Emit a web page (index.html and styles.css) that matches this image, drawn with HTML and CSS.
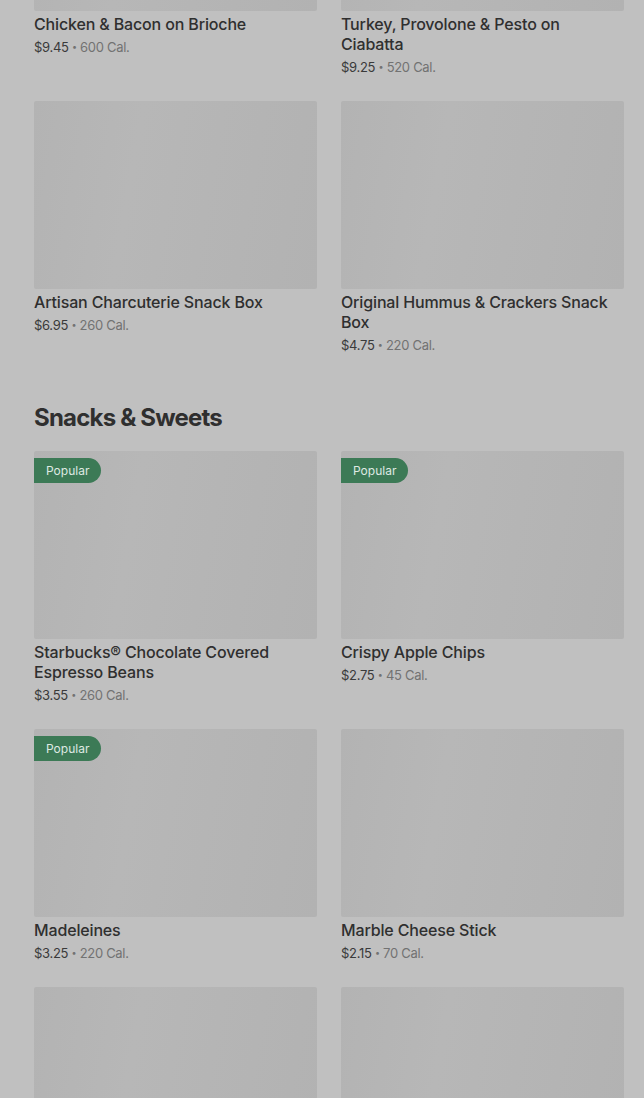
FILE: index.html
```html
<!DOCTYPE html>
<html lang="en">
<head>
<meta charset="utf-8">
<title>Menu</title>
<link rel="stylesheet" href="styles.css">
</head>
<body>
<main class="page">
  <section class="section">
    <div class="grid">
      <div class="card">
        <div class="thumb"></div>
        <div class="title">Chicken &amp; Bacon on Brioche</div>
        <div class="meta"><span class="price">$9.45</span> <span class="dot">•</span> 600 Cal.</div>
      </div>
      <div class="card">
        <div class="thumb"></div>
        <div class="title">Turkey, Provolone &amp; Pesto on Ciabatta</div>
        <div class="meta"><span class="price">$9.25</span> <span class="dot">•</span> 520 Cal.</div>
      </div>
      <div class="card">
        <div class="thumb"></div>
        <div class="title">Artisan Charcuterie Snack Box</div>
        <div class="meta"><span class="price">$6.95</span> <span class="dot">•</span> 260 Cal.</div>
      </div>
      <div class="card">
        <div class="thumb"></div>
        <div class="title">Original Hummus &amp; Crackers Snack Box</div>
        <div class="meta"><span class="price">$4.75</span> <span class="dot">•</span> 220 Cal.</div>
      </div>
    </div>
  </section>

  <section class="section section-next">
    <h2 class="heading">Snacks &amp; Sweets</h2>
    <div class="grid">
      <div class="card">
        <div class="thumb"><span class="badge">Popular</span></div>
        <div class="title">Starbucks® Chocolate Covered Espresso Beans</div>
        <div class="meta"><span class="price">$3.55</span> <span class="dot">•</span> 260 Cal.</div>
      </div>
      <div class="card">
        <div class="thumb"><span class="badge">Popular</span></div>
        <div class="title">Crispy Apple Chips</div>
        <div class="meta"><span class="price">$2.75</span> <span class="dot">•</span> 45 Cal.</div>
      </div>
      <div class="card">
        <div class="thumb"><span class="badge">Popular</span></div>
        <div class="title">Madeleines</div>
        <div class="meta"><span class="price">$3.25</span> <span class="dot">•</span> 220 Cal.</div>
      </div>
      <div class="card">
        <div class="thumb"></div>
        <div class="title">Marble Cheese Stick</div>
        <div class="meta"><span class="price">$2.15</span> <span class="dot">•</span> 70 Cal.</div>
      </div>
      <div class="card">
        <div class="thumb"></div>
      </div>
      <div class="card">
        <div class="thumb"></div>
      </div>
    </div>
  </section>
</main>
</body>
</html>
```

FILE: styles.css
```css
html, body {
  margin: 0;
  padding: 0;
  background: #c0c0c0;
  overflow: hidden;
}

body {
  font-family: Inter, "Noto Sans", "Liberation Sans", sans-serif;
  color: #2f2f2f;
}

.page {
  margin-top: -177px;
  padding: 0 20px 0 34px;
}

.section-next {
  margin-top: 47px;
}

.heading {
  margin: 0 0 17px 0;
  font-size: 24px;
  line-height: 32px;
  font-weight: 700;
  letter-spacing: -0.8px;
  color: #2f2f2f;
}

.grid {
  display: grid;
  grid-template-columns: 283px 283px;
  column-gap: 24px;
  row-gap: 24px;
  align-items: start;
}

.card {
  display: flex;
  flex-direction: column;
}

.thumb {
  position: relative;
  height: 188px;
  border-radius: 2px;
  background: linear-gradient(100deg, #b3b3b3 0%, #b7b7b7 35%, #b5b5b5 60%, #b2b2b2 100%);
}

.badge {
  position: absolute;
  top: 7px;
  left: 0;
  height: 25px;
  padding: 0 12px;
  display: flex;
  align-items: center;
  font-size: 12px;
  font-weight: 400;
  color: #dfe9e2;
  background: #3c7a56;
  border-radius: 0 13px 13px 0;
}

.title {
  margin-top: 3px;
  font-size: 16px;
  line-height: 20px;
  font-weight: 500;
  letter-spacing: -0.15px;
  color: #2f2f2f;
}

.meta {
  margin-top: 3px;
  height: 20px;
  font-size: 13px;
  line-height: 20px;
  letter-spacing: -0.3px;
  color: #727272;
}

.price {
  color: #3a3a3a;
}

.dot {
  display: inline-block;
  font-size: 9px;
  line-height: 1;
  vertical-align: 2px;
}
```
